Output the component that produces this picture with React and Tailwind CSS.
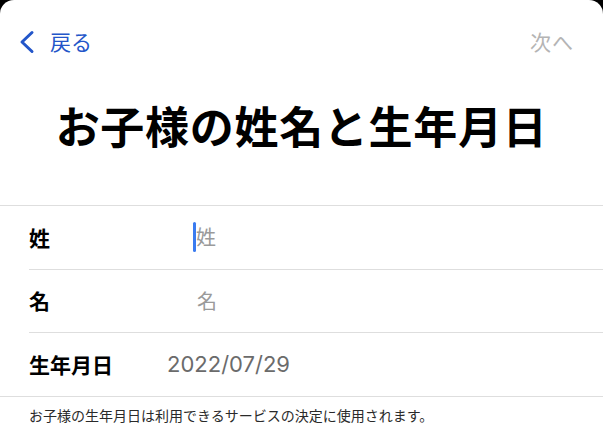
import React from 'react';

const jp = { fontFamily: '"Noto Sans CJK JP", "Noto Sans", sans-serif' };

const Row = ({ label, children, inset = true }) => (
  <div className={`flex items-center h-[63.5px] ${inset ? 'ml-[29px] border-b border-[#dedede]' : 'border-b border-[#dedede]'}`}>
    <div className={`${inset ? 'w-[138px]' : 'pl-[29px] w-[167px]'} text-[21px] font-bold text-black leading-none`}>{label}</div>
    {children}
  </div>
);

const App = () => {
  return (
    <div className="min-h-screen bg-black" style={jp}>
      <div className="bg-white rounded-t-[14px] h-[448px] overflow-hidden">
        {/* nav */}
        <div className="flex items-center justify-between h-[30px] mt-[26px] pl-[18px] pr-[30px]">
          <button className="flex items-center gap-[14px] text-[#2356c9]">
            <svg width="18" height="24" viewBox="0 0 18 24" fill="none" className="mt-[2px]">
              <path d="M14 2.5 L4 12 L14 21.5" stroke="#2356c9" strokeWidth="3" strokeLinecap="round" strokeLinejoin="round" />
            </svg>
            <span className="text-[21px] leading-none">戻る</span>
          </button>
          <span className="text-[21px] leading-none text-[#b4b4b4] -mr-[1px] tracking-[1px]">次へ</span>
        </div>

        <h1 className="mt-[41px] text-center text-[44px] leading-[56px] font-bold text-black tracking-[0.7px]">
          お子様の姓名と生年月日
        </h1>

        <div className="mt-[52px] border-t border-[#dedede]">
          <Row label="姓">
            <div className="flex items-center ml-[28px]">
              <span className="w-[3px] h-[30px] bg-[#3a7bf0] rounded-full -ml-[2px]"></span>
              <span className="text-[20px] leading-none text-[#9a9a9a]">姓</span>
            </div>
          </Row>
          <Row label="名">
            <span className="ml-[30px] text-[20px] leading-none text-[#9a9a9a]">名</span>
          </Row>
          <Row label="生年月日" inset={false}>
            <span className="text-[22px] leading-none text-[#6b6b6b]" style={{ fontFamily: 'Inter, "Noto Sans CJK JP", sans-serif' }}>
              2022/07/29
            </span>
          </Row>
        </div>

        <p className="pt-[8px] pl-[29px] text-[14px] leading-[20px] text-[#2a2a2a]">
          お子様の生年月日は利用できるサービスの決定に使用されます。
        </p>
      </div>
    </div>
  );
};

export default App;
